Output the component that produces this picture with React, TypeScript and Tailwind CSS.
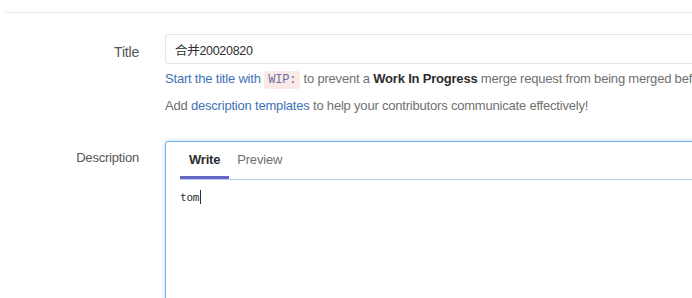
import React from "react";

const App = () => {
  return (
    <div
      className="h-[298px] w-[692px] overflow-hidden bg-white text-[13px] tracking-[-0.2px] text-[#2e2e2e]"
      style={{ fontFamily: "'Liberation Sans', 'Noto Sans CJK SC', sans-serif" }}
    >
      <div className="ml-[6px] mt-[12px] w-[1000px] border-t border-[#e8e8e8] pt-[21px]">
        {/* title row */}
        <div className="flex">
          <label className="w-[133px] pt-[8px] text-right text-[14px] text-[#555]">Title</label>
          <div className="ml-[26px] w-[800px]">
            <input
              readOnly
              value="合并20020820"
              className="h-[30px] w-full rounded-[3px] border border-[#e5e5e5] px-[9px] text-[12.5px] tracking-[-0.3px] text-[#2e2e2e] outline-none"
            />
            <p className="mt-[5px] whitespace-nowrap leading-[20px] text-[#707070]">
              <a className="text-[#3f73b8]">
                Start the title with{" "}
                <code className="rounded-[3px] bg-[#fbe9e7] px-[4px] py-[2px] font-['Liberation_Mono',monospace] text-[12px] text-[#6a70a8]">
                  WIP:
                </code>
              </a>{" "}
              to prevent a <strong className="font-bold text-[#2e2e2e]">Work In Progress</strong> merge
              request from being merged before it's ready.
            </p>
            <p className="mt-[6px] whitespace-nowrap leading-[20px] text-[#707070]">
              Add <a className="text-[#3f73b8]">description templates</a> to help your contributors
              communicate effectively!
            </p>
          </div>
        </div>

        {/* description row */}
        <div className="mt-[25px] flex">
          <label className="w-[133px] pt-[7px] text-right text-[#555]">Description</label>
          <div className="ml-[26px] h-[200px] w-[800px] rounded-[3px] border border-[#73afea] shadow-[0_0_4px_rgba(115,175,234,0.5)]">
            <div className="mx-[14px] flex border-b border-[#b7cdef]">
              <div className="border-b-[3px] border-[#6666c4] px-[9px] pb-[6px] pt-[8px] font-bold text-[#2e2e2e]">
                Write
              </div>
              <div className="px-[8px] pb-[6px] pt-[8px] text-[#707070]">Preview</div>
            </div>
            <div className="px-[14px] pt-[7px] font-['DejaVu_Sans_Mono',monospace] text-[11px] text-[#2e2e2e]">
              tom<span className="ml-[1px] inline-block h-[14px] w-[1px] translate-y-[3px] bg-[#2e2e2e]" />
            </div>
          </div>
        </div>
      </div>
    </div>
  );
};

export default App;
